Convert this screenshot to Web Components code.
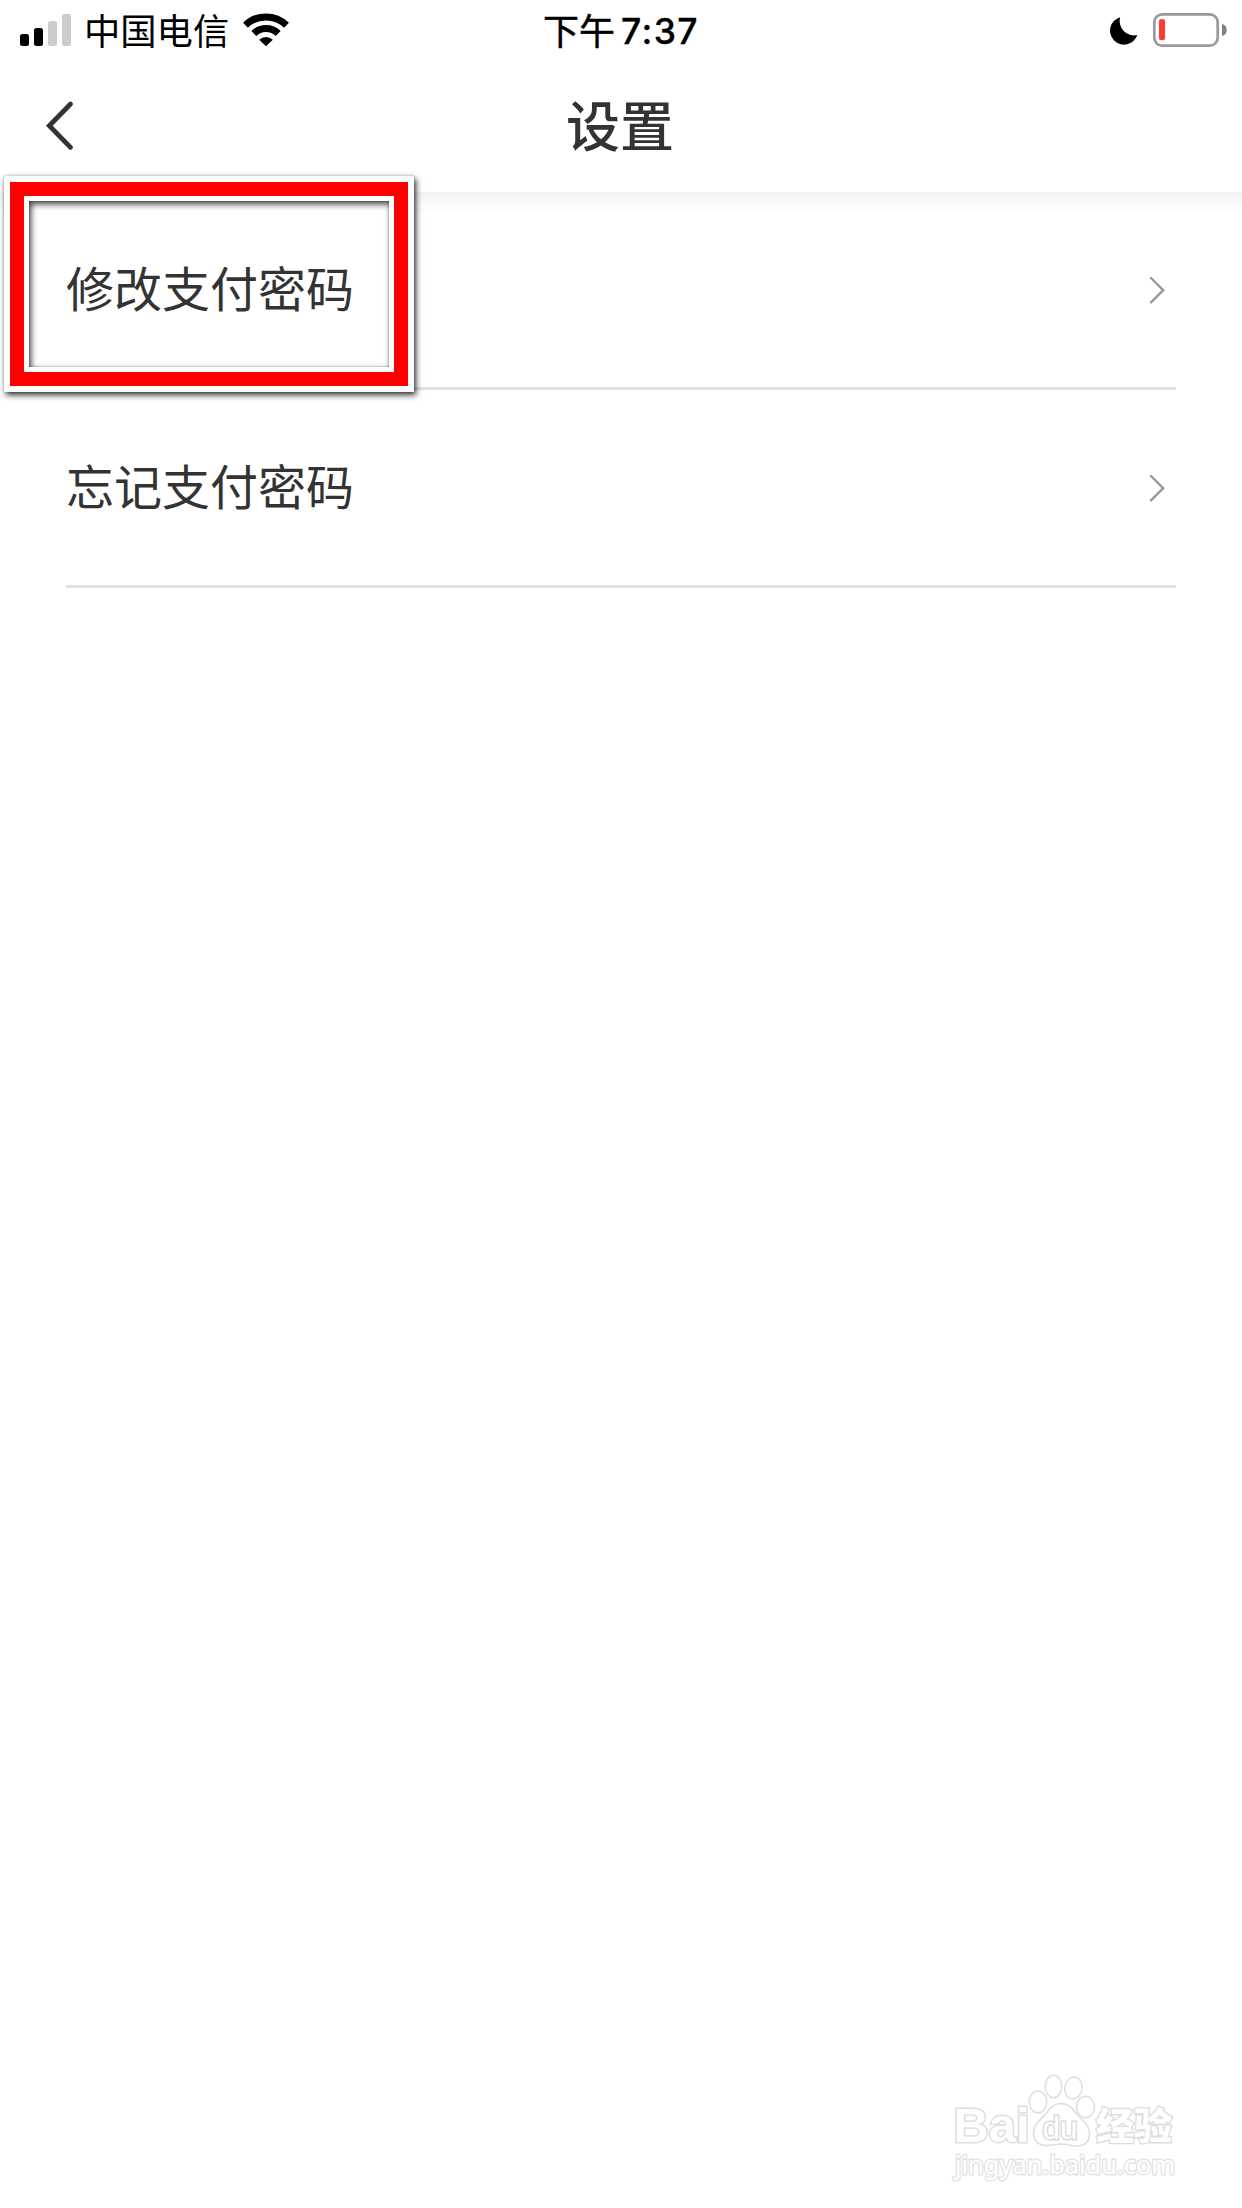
<!DOCTYPE html>
<html lang="zh-CN">
<head>
<meta charset="utf-8">
<title>设置</title>
<style>
html,body{margin:0;background:#fff}
body{font-family:Inter,"Noto Sans CJK SC",sans-serif;color:#333}
</style>
</head>
<body>
<settings-screen></settings-screen>
<script>
const define = (name, html) => customElements.define(name, class extends HTMLElement {
  constructor() {
    super();
    this.attachShadow({mode: 'open'}).innerHTML = html;
  }
});

define('status-bar', `
<style>
:host{display:grid;grid-template-columns:1fr auto 1fr;height:63px;color:#000;font-size:36px;line-height:63px}
svg{display:block;flex:none}
.side{display:flex;align-items:flex-start}
.right{justify-content:flex-end}
.carrier{font-family:"Noto Sans CJK SC",sans-serif;font-size:36.3px;line-height:59px;margin-left:13px;width:146px}
.time{display:flex;align-items:flex-start;gap:6px}
.time span{font-family:"Noto Sans CJK SC",sans-serif;font-weight:400;line-height:59px;-webkit-text-stroke:.5px #000}
.time b{font-family:Inter,sans-serif;font-weight:500;font-size:35.5px;letter-spacing:1.4px;-webkit-text-stroke:.3px #000}
</style>
<div class="side">
  <svg width="71" height="63"><g><rect x="20" y="34" width="9" height="12" rx="2.5"/><rect x="34" y="28" width="9" height="18" rx="2.5"/><rect x="48" y="21" width="9" height="25" rx="2.5" fill="#ccc"/><rect x="62" y="14" width="9" height="32" rx="2.5" fill="#ccc"/></g></svg>
  <span class="carrier">中国电信</span>
  <svg style="margin-left:12px" width="48" height="63" viewBox="242 0 48 63"><g fill="none" stroke="#000" stroke-width="7"><path d="M245.5 25.2a29.5 29.5 0 0 1 41 0"/><path d="M253.8 33.5a17.6 17.6 0 0 1 24.4 0"/></g><path d="M259.2 39.7a9.7 9.7 0 0 1 13.6 0L266 46.3Z"/></svg>
</div>
<div class="time"><span>下午</span><b>7:37</b></div>
<div class="side right">
  <svg width="132" height="63" viewBox="1110 0 132 63"><path d="M1120.2 17.2A14 14 0 1 0 1137.3 35.1A14.4 14.4 0 0 1 1120.2 17.2Z"/><rect x="1154.3" y="14.3" width="63.4" height="31.4" rx="8" fill="none" stroke="#999" stroke-width="2.7"/><rect x="1159" y="19" width="6" height="21.3" rx="2.5" fill="#ff3b30"/><path d="M1222 24a6.2 6.2 0 0 1 0 12Z" fill="#808080"/></svg>
</div>`);

define('nav-bar', `
<style>
:host{display:grid;grid-template-columns:1fr auto 1fr;align-items:center;height:129px}
svg{display:block;margin:0 0 3px 45px}
h1{margin:0;font:500 54px/80px "Noto Sans CJK SC",sans-serif;padding:0 2px 8px 0}
</style>
<svg width="30" height="54" viewBox="45 99 30 54"><path d="M70.5 104 49.3 125.7 70.5 147.4" fill="none" stroke="#333" stroke-width="4.8" stroke-linecap="round"/></svg>
<h1><slot></slot></h1>`);

define('settings-row', `
<style>
:host{display:flex;position:relative;align-items:center;justify-content:space-between;height:195px;margin:0 66px;border-bottom:3px solid #e2e2e2;font:400 48px/72px "Noto Sans CJK SC",sans-serif}
.label{padding-bottom:8px}
svg{display:block;margin-right:9px;margin-bottom:-1px}
</style>
<span class="label"><slot></slot></span>
<svg width="18" height="30" viewBox="1149 275 18 30"><path d="m1151 278 12.2 12.2-12.2 12.2" fill="none" stroke="#999" stroke-width="2.4" stroke-linecap="round"/></svg>
<slot name="overlay"></slot>`);

define('highlight-frame', `
<style>
:host{position:absolute;left:-62px;top:-16px;width:410px;height:216px;box-sizing:border-box;border:6px solid #fff;box-shadow:2px 3px 6px rgba(0,0,0,.8),0 0 3px rgba(0,0,0,.2)}
.red{box-sizing:border-box;height:100%;border:14px solid #f00;display:flex}
.in{flex:1;border:5px solid #fff;display:flex}
.in i{flex:1;box-shadow:inset 2px 3px 6px rgba(0,0,0,.75),inset 0 0 2px rgba(0,0,0,.4)}
</style>
<div class="red"><div class="in"><i></i></div></div>`);

define('site-watermark', `
<style>
:host{display:block;width:240px;height:120px}
svg{display:block}
</style>
<svg width="240" height="120" viewBox="945 2068 240 120">
<g fill="#fff" stroke="#dedede" stroke-width="1.5">
<text x="953.5" y="2142" font-family="Liberation Sans,sans-serif" font-weight="700" font-size="48" textLength="76" lengthAdjust="spacingAndGlyphs" stroke-width="3" paint-order="stroke">Bai</text>
<g stroke-width="2.8" paint-order="stroke">
<text x="1096" y="2139.5" font-family="Noto Sans CJK SC,sans-serif" font-weight="900" font-size="37" textLength="76" lengthAdjust="spacingAndGlyphs">经验</text>
<text x="955" y="2174" font-family="Noto Sans,sans-serif" font-size="25.5" textLength="220" lengthAdjust="spacingAndGlyphs" stroke="#e4e4e4">jingyan.baidu.com</text>
</g>
<ellipse cx="1038" cy="2102" rx="8.8" ry="11"/><ellipse cx="1053.5" cy="2086.5" rx="8.3" ry="11.3"/><ellipse cx="1073.5" cy="2088" rx="8.6" ry="11" transform="rotate(10 1073.5 2088)"/><ellipse cx="1085.5" cy="2107" rx="9" ry="10.8"/>
<path d="M1061 2103.5c-8 0-11 5-15 10-5 6-12 10-12.5 19-.5 8 5 13 13 13 6 0 9-1.5 15-1.5s9 2 16 2c8 0 12.5-5.5 12-13.5-.5-8-7-12-13-19-4-5-7.5-10-15.5-10Z"/>
<text x="1042.5" y="2138.5" font-family="Liberation Sans,sans-serif" font-weight="400" font-size="32" textLength="35" lengthAdjust="spacingAndGlyphs" stroke="#dadada" stroke-width="3" paint-order="stroke">du</text>
</g></svg>`);

define('settings-screen', `
<style>
:host{display:flex;flex-direction:column;height:2208px;background:#fff}
main{flex:1;background:linear-gradient(#f4f4f4,#fafafa 10px,#fff 22px)}
footer{display:flex;justify-content:flex-end;padding:0 57px 20px 0}
</style>
<status-bar></status-bar>
<nav-bar>设置</nav-bar>
<main>
<settings-row>修改支付密码<highlight-frame slot="overlay"></highlight-frame></settings-row>
<settings-row>忘记支付密码</settings-row>
</main>
<footer><site-watermark></site-watermark></footer>`);
</script>
</body>
</html>
